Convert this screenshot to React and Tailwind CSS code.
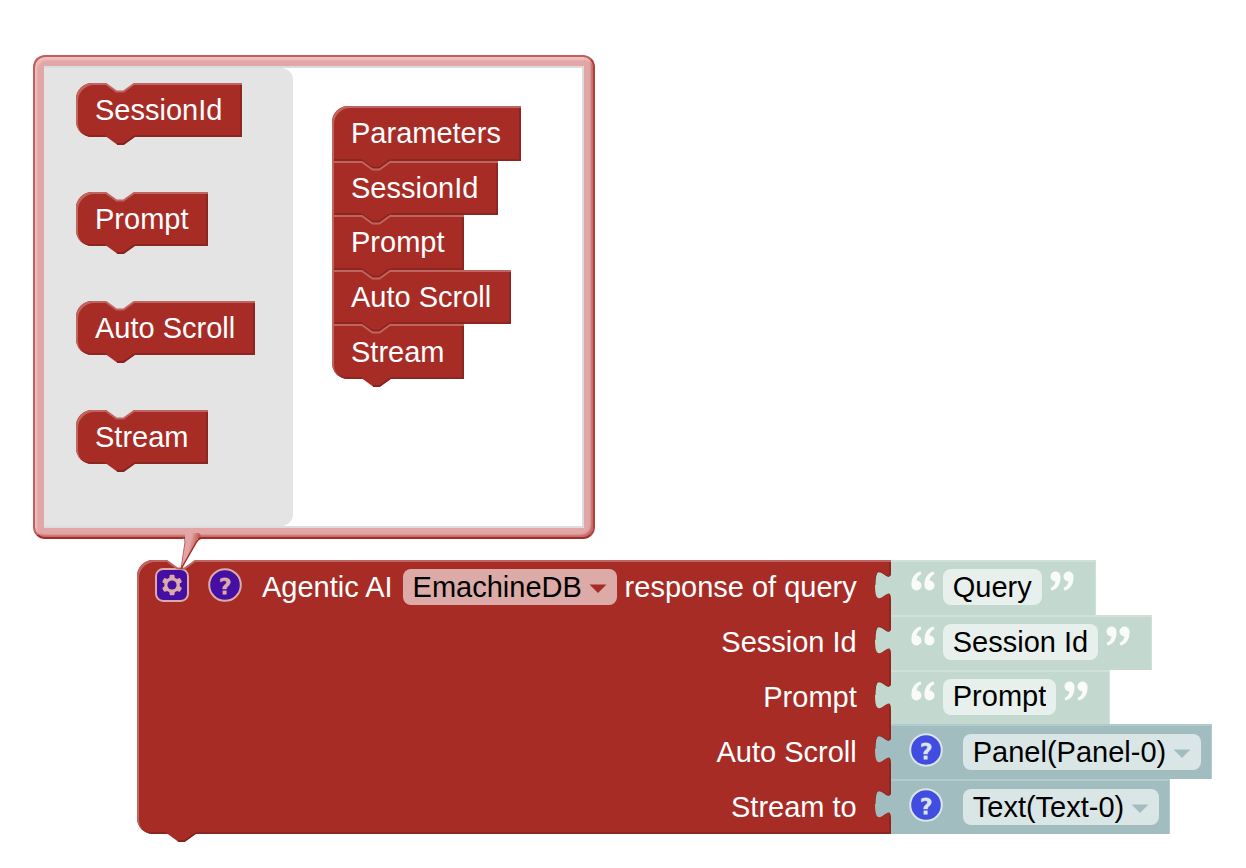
import React from "react";

function QuoteMark({ x }) {
  return (
    <g transform={`translate(${x} 0)`}>
      <circle cx="5.5" cy="14.5" r="5" fill="#fff" />
      <path d="M0.6 14 C0 7 4 1.5 9.6 0.4 L10.4 3.2 C7.5 4.5 5.8 6.5 5.4 10 Z" fill="#fff" />
    </g>
  );
}

function Quote({ closing }) {
  return (
    <svg
      viewBox="0 0 24 20"
      className={closing ? "mb-3 h-5 w-6 rotate-180 opacity-90" : "mb-3 h-5 w-6 opacity-90"}
      aria-hidden="true"
    >
      <QuoteMark x={0} />
      <QuoteMark x={13} />
    </svg>
  );
}

function Notch({ fill, seamed }) {
  return (
    <svg
      viewBox="0 -3 32 14"
      className="absolute -top-[3px] left-7 h-3.5 w-8"
      aria-hidden="true"
    >
      <path d={seamed ? "M1 -2 H31 V0 L20 9 H12 L1 0 Z" : "M1 0 H31 L20 8 H12 Z"} fill={fill} />
      {seamed && (
        <path d="M1 -1 L12 6.6 H19.5 L30 -1" fill="none" stroke="#86231e" strokeWidth="1.8" />
      )}
      <path d="M0 1 H2 L12.5 8.6 H19.5 L30 1 H32" fill="none" stroke="#c0645f" strokeWidth="2" />
    </svg>
  );
}

function Tab() {
  return (
    <svg
      viewBox="0 0 30 10"
      className="absolute -bottom-2 left-[29px] h-2.5 w-[30px]"
      aria-hidden="true"
    >
      <path d="M0 0 H30 V1.5 L19 9.5 H12 L1 1.5 Z" fill="#a82c26" />
      <path d="M12 9 H18.5 L30 1" fill="none" stroke="#86231e" strokeWidth="1.8" />
    </svg>
  );
}

const redBlock =
  "relative bg-[#a82c26] text-white shadow-[inset_2px_2px_0_#c0645f,inset_-2px_-2px_0_#8b2621]";

function PaletteBlock({ name }) {
  return (
    <li className={`${redBlock} flex h-[54px] w-fit items-center rounded-l-2xl pr-5 pl-[19px]`}>
      <Notch fill="#e4e4e4" />
      {name}
      <Tab />
    </li>
  );
}

function StackBlock({ name, first, last }) {
  const corner = first ? "rounded-tl-2xl" : last ? "rounded-bl-2xl" : "";
  return (
    <li className={`${redBlock} ${corner} flex w-fit items-center pr-5 pl-[19px]`}>
      {!first && <Notch fill="#a82c26" seamed />}
      {name}
      {last && <Tab />}
    </li>
  );
}

function HelpIcon({ fill, ink }) {
  return (
    <svg viewBox="-0.5 -0.5 17 17" className="size-[34px]" aria-hidden="true">
      <circle cx="8" cy="8" r="7.9" fill={fill} stroke={ink} strokeWidth="1" />
      <path
        d="m6.8,10h2c0.003,-0.617 0.271,-0.962 0.633,-1.266 2.875,-2.405 0.607,-5.534 -3.765,-3.874v1.7c3.12,-1.657 3.698,0.118 2.336,1.25 -1.201,0.998 -1.201,1.528 -1.204,2.19z"
        fill={ink}
        stroke={ink}
        strokeWidth="0.2"
      />
      <rect x="6.8" y="10.78" width="2" height="2" fill={ink} />
    </svg>
  );
}

function GearIcon() {
  return (
    <svg viewBox="-0.5 -0.5 17 17" className="size-[34px]" aria-hidden="true">
      <rect width="16" height="16" rx="3.6" fill="#460fa3" stroke="#dcaba8" strokeWidth="1" />
      <path
        d="m4.203,7.296 0,1.368 -0.92,0.677 -0.11,0.41 0.9,1.559 0.41,0.11 1.043,-0.457 1.187,0.683 0.127,1.134 0.3,0.3 1.8,0 0.3,-0.299 0.127,-1.138 1.185,-0.682 1.046,0.458 0.409,-0.11 0.9,-1.559 -0.11,-0.41 -0.92,-0.677 0,-1.366 0.92,-0.677 0.11,-0.41 -0.9,-1.559 -0.409,-0.109 -1.046,0.458 -1.185,-0.682 -0.127,-1.138 -0.3,-0.299 -1.8,0 -0.3,0.3 -0.126,1.135 -1.187,0.682 -1.043,-0.457 -0.41,0.11 -0.899,1.559 0.108,0.409z"
        fill="#dcaba8"
      />
      <circle cx="8" cy="8" r="2.3" fill="#460fa3" />
    </svg>
  );
}

function Dropdown({ id, label, value, tone, arrow }) {
  return (
    <span className="relative flex items-center">
      <select
        id={id}
        aria-label={label}
        defaultValue={value}
        className={`h-9 appearance-none rounded-lg pr-[34px] pl-2.5 text-black outline-none ${tone}`}
      >
        <option>{value}</option>
      </select>
      <svg
        viewBox="0 0 18 10"
        className="pointer-events-none absolute top-[15px] right-2.5 h-2.5 w-[18px]"
        aria-hidden="true"
      >
        <path d="M0.5 0.5 H17.5 L9 9 Z" fill={arrow} />
      </svg>
    </span>
  );
}

function Plug({ fill }) {
  return (
    <svg viewBox="0 0 8 20" className="absolute top-0 right-full h-10 w-4" aria-hidden="true">
      <path d="M8 5 c0,10 -8,-8 -8,7.5 s8,-2.5 8,7.5 Z" fill={fill} />
      <path d="M8 5 c0,10 -8,-8 -8,7.5" fill="none" stroke="#86231e" strokeWidth="0.5" />
    </svg>
  );
}

function TextValue({ id, value }) {
  return (
    <div className="relative flex w-fit items-center gap-2 bg-[#c3d9cf] pr-[22px] pl-5 shadow-[inset_-1px_2px_0_#cfe1d9]">
      <Plug fill="#c3d9cf" />
      <Quote />
      <input
        id={id}
        type="text"
        defaultValue={value}
        className="field-sizing-content h-9 rounded-lg bg-[#e7f0ec] px-2.5 text-black outline-none"
      />
      <Quote closing />
    </div>
  );
}

function PickValue({ id, value, help }) {
  return (
    <div className="relative flex w-fit items-center gap-5 bg-[#a2bdc0] pr-[11px] pl-[18px] shadow-[inset_-1px_2px_0_#b3cacd]">
      <Plug fill="#a2bdc0" />
      <button type="button" aria-label={help} className="mb-1">
        <HelpIcon fill="#414de0" ink="#dae5e6" />
      </button>
      <Dropdown id={id} value={value} tone="bg-[#dae5e6]" arrow="#a2bdc0" />
    </div>
  );
}

function Bubble() {
  return (
    <section
      aria-label="Parameters editor"
      className="relative w-fit rounded-xl border-2 border-t-[#c0605d] border-r-[#b0403b] border-b-[#a82c26] border-l-[#c0605d] bg-[#e2a6a6] p-[9px] shadow-[inset_2px_3px_2px_#f0bfc0,inset_-2px_-2px_2px_#c46a68]"
    >
      <div className="flex min-h-[462px] w-[540px] border-2 border-l-0 border-[#dcdcde] bg-white">
        <ul className="flex w-[249px] flex-col gap-[55px] rounded-r-xl bg-[#e4e4e4] pt-[15px] pl-8">
          <PaletteBlock name="SessionId" />
          <PaletteBlock name="Prompt" />
          <PaletteBlock name="Auto Scroll" />
          <PaletteBlock name="Stream" />
        </ul>
        <ul className="mt-[38px] ml-[39px] grid h-[273px] grid-rows-5">
          <StackBlock name="Parameters" first />
          <StackBlock name="SessionId" />
          <StackBlock name="Prompt" />
          <StackBlock name="Auto Scroll" />
          <StackBlock name="Stream" last />
        </ul>
      </div>
      <svg
        viewBox="0 0 26 42"
        className="absolute top-[471px] left-[144px] z-10 h-[42px] w-[26px]"
        aria-hidden="true"
      >
        <defs>
          <linearGradient id="tail" x1="0" x2="1" y1="0.2" y2="0.6">
            <stop offset="0.4" stopColor="#e2a6a6" />
            <stop offset="0.8" stopColor="#b84e4a" />
          </linearGradient>
        </defs>
        <path d="M6 5 H20 L22 8 Q19 10 17 14 L2 41 L6 14 Z" fill="url(#tail)" />
        <path d="M4 10 Q6 11 6 14 L2 41" fill="none" stroke="#c0605d" strokeWidth="1" />
        <path d="M24 10 Q20 10 17.5 14 L2 41" fill="none" stroke="#a82c26" strokeWidth="1.5" />
      </svg>
    </section>
  );
}

function AgentBlock() {
  return (
    <section aria-label="Agentic AI" className="mt-[21px] ml-[104px] flex w-max">
      <div className={`${redBlock} grid h-[274px] grid-rows-5 justify-items-end rounded-l-2xl pr-[34px] pl-[18px]`}>
        <Notch fill="#ffffff" />
        <div className="flex items-center">
          <button type="button" aria-label="Edit parameters" className="mb-1">
            <GearIcon />
          </button>
          <button type="button" aria-label="Help" className="mb-1 ml-[19px]">
            <HelpIcon fill="#460fa3" ink="#dcaba8" />
          </button>
          <span className="mr-2.5 ml-5">Agentic AI</span>
          <Dropdown
            id="agent"
            label="Agent"
            value="EmachineDB"
            tone="bg-[#dcaba8]"
            arrow="#a82c26"
          />
          <label htmlFor="query" className="ml-2">
            response of query
          </label>
        </div>
        <label htmlFor="session" className="flex items-center">Session Id</label>
        <label htmlFor="prompt" className="flex items-center">Prompt</label>
        <label htmlFor="scroll" className="flex items-center">Auto Scroll</label>
        <label htmlFor="stream" className="flex items-center">Stream to</label>
        <Tab />
      </div>
      <div className="grid h-[274px] grid-rows-5">
        <TextValue id="query" value="Query" />
        <TextValue id="session" value="Session Id" />
        <TextValue id="prompt" value="Prompt" />
        <PickValue id="scroll" value="Panel(Panel-0)" help="Help for Auto Scroll" />
        <PickValue id="stream" value="Text(Text-0)" help="Help for Stream to" />
      </div>
    </section>
  );
}

export default function App() {
  return (
    <main className="min-h-screen bg-white pt-[55px] pl-[33px] font-['Liberation_Sans',Arial,sans-serif] text-[29px] leading-8">
      <Bubble />
      <AgentBlock />
    </main>
  );
}
